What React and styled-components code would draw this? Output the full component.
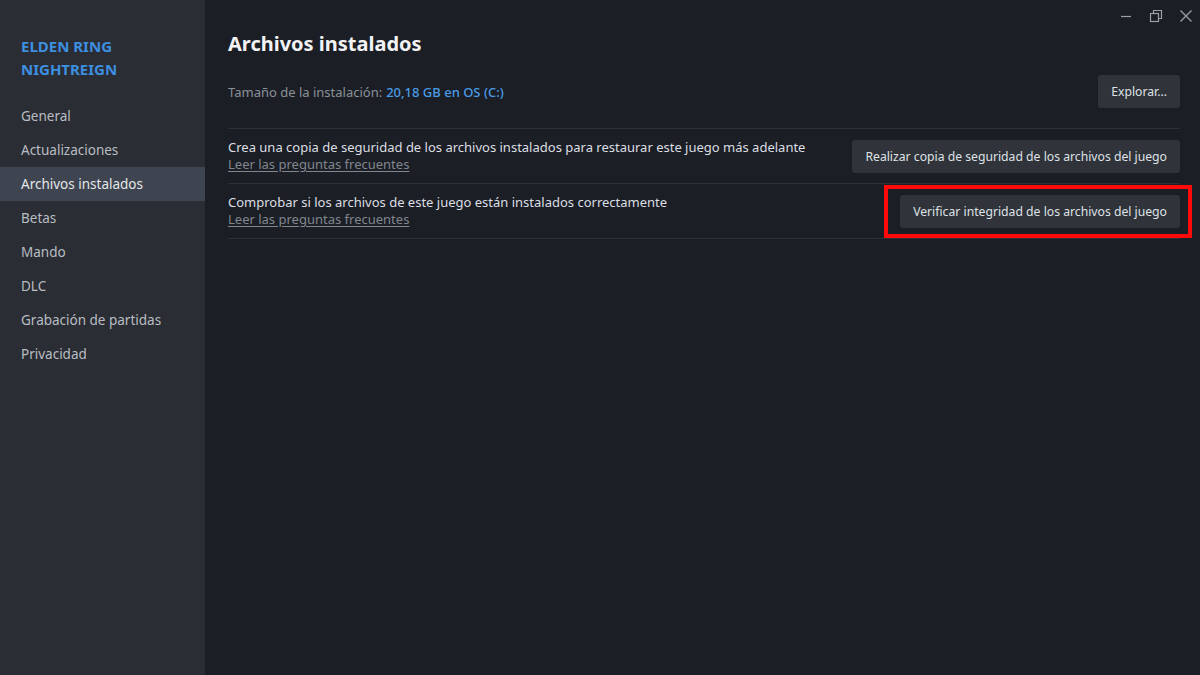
import React from 'react';
import styled, { createGlobalStyle } from 'styled-components';

const GlobalStyle = createGlobalStyle`
  html, body {
    margin: 0;
    padding: 0;
    background: #1b1e25;
    font-family: "Noto Sans", "Open Sans", sans-serif;
  }
`;

const Window = styled.div`
  display: flex;
  width: 1200px;
  height: 675px;
  overflow: hidden;
  background: #1b1e25;
  position: relative;
`;

const Sidebar = styled.nav`
  width: 205px;
  flex-shrink: 0;
  background: #2a2d33;
  display: flex;
  flex-direction: column;
  padding-top: 35px;
`;

const GameTitle = styled.div`
  color: #3d8fe0;
  font-weight: 700;
  font-size: 15px;
  line-height: 23px;
  padding: 0 21px;
  margin-bottom: 18px;
`;

const NavItem = styled.div`
  height: 34px;
  display: flex;
  align-items: center;
  padding: 0 21px;
  font-size: 13.5px;
  color: ${p => (p.$active ? '#e4e7ea' : '#b9bdc3')};
  background: ${p => (p.$active ? '#3e4450' : 'transparent')};
`;

const Main = styled.main`
  flex: 1;
  padding: 28px 20px 0 23px;
  display: flex;
  flex-direction: column;
`;

const Heading = styled.h1`
  margin: 0;
  font-size: 20px;
  font-weight: 700;
  color: #f2f3f4;
  line-height: 32px;
`;

const SizeRow = styled.div`
  display: flex;
  align-items: center;
  justify-content: space-between;
  margin-top: 15px;
  padding-bottom: 20px;
  border-bottom: 1px solid #2c3038;
`;

const SizeText = styled.div`
  font-size: 13px;
  color: #8b9199;
`;

const SizeValue = styled.span`
  color: #4a9be6;
  font-weight: 500;
  margin-left: 4px;
`;

const Button = styled.button`
  font-family: inherit;
  font-size: 12.2px;
  color: #dfe2e6;
  background: #30333a;
  border: none;
  border-radius: 3px;
  height: 33px;
  padding: 0 13px;
  white-space: nowrap;
`;

const OptionRow = styled.div`
  display: flex;
  align-items: center;
  justify-content: space-between;
  padding: 10px 0 10px;
  border-bottom: 1px solid #2c3038;
`;

const OptionText = styled.div`
  display: flex;
  flex-direction: column;
  font-size: 13px;
  line-height: 17px;
  color: #dcdfe3;
`;

const FaqLink = styled.a`
  color: #80868e;
  text-decoration: underline;
  text-underline-offset: 2px;
`;

const Highlight = styled.div`
  position: relative;
  &::after {
    content: '';
    position: absolute;
    left: -16px;
    right: -12px;
    top: -10px;
    bottom: -10px;
    border: 4px solid #ff0a0a;
  }
`;

const WindowControls = styled.div`
  position: absolute;
  top: 7px;
  right: 4px;
  display: flex;
  gap: 10px;
  color: #9aa0a8;
`;

const Control = styled.div`
  width: 20px;
  height: 18px;
  display: flex;
  align-items: center;
  justify-content: center;
`;

export default function App() {
  const nav = [
    'General',
    'Actualizaciones',
    'Archivos instalados',
    'Betas',
    'Mando',
    'DLC',
    'Grabación de partidas',
    'Privacidad',
  ];
  return (
    <>
      <GlobalStyle />
      <Window>
        <Sidebar>
          <GameTitle>
            ELDEN RING
            <br />
            NIGHTREIGN
          </GameTitle>
          {nav.map(item => (
            <NavItem key={item} $active={item === 'Archivos instalados'}>
              {item}
            </NavItem>
          ))}
        </Sidebar>
        <Main>
          <Heading>Archivos instalados</Heading>
          <SizeRow>
            <SizeText>
              Tamaño de la instalación:
              <SizeValue>20,18 GB en OS (C:)</SizeValue>
            </SizeText>
            <Button>Explorar...</Button>
          </SizeRow>
          <OptionRow>
            <OptionText>
              Crea una copia de seguridad de los archivos instalados para restaurar este juego más adelante
              <FaqLink>Leer las preguntas frecuentes</FaqLink>
            </OptionText>
            <Button>Realizar copia de seguridad de los archivos del juego</Button>
          </OptionRow>
          <OptionRow>
            <OptionText>
              Comprobar si los archivos de este juego están instalados correctamente
              <FaqLink>Leer las preguntas frecuentes</FaqLink>
            </OptionText>
            <Highlight>
              <Button>Verificar integridad de los archivos del juego</Button>
            </Highlight>
          </OptionRow>
        </Main>
        <WindowControls>
          <Control>
            <svg width="12" height="12" viewBox="0 0 12 12">
              <path d="M1 6.5h10" stroke="currentColor" strokeWidth="1.2" />
            </svg>
          </Control>
          <Control>
            <svg width="14" height="14" viewBox="0 0 14 14" fill="none" stroke="currentColor" strokeWidth="1.2">
              <rect x="1.5" y="4.5" width="8" height="8" />
              <path d="M4.5 4.5V1.5h8v8h-3" />
            </svg>
          </Control>
          <Control>
            <svg width="14" height="14" viewBox="0 0 14 14" stroke="currentColor" strokeWidth="1.3">
              <path d="M1.5 1.5l11 11M12.5 1.5l-11 11" />
            </svg>
          </Control>
        </WindowControls>
      </Window>
    </>
  );
}
